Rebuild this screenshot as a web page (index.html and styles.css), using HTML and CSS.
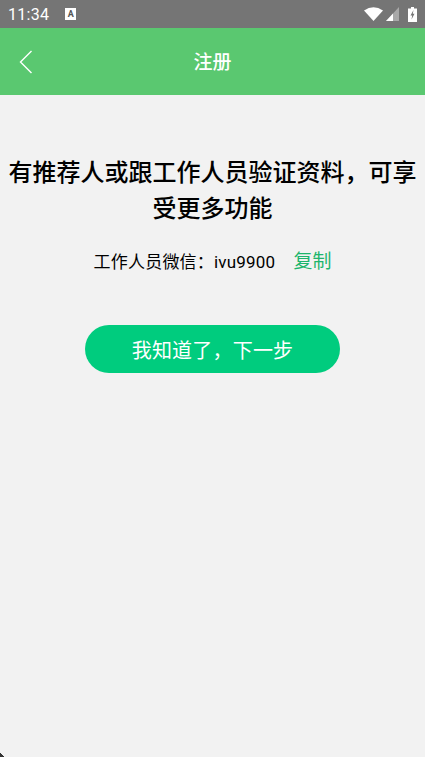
FILE: index.html
```html
<!DOCTYPE html>
<html lang="zh-CN">
<head>
  <meta charset="UTF-8" />
  <meta name="viewport" content="width=device-width, initial-scale=1.0"/>
  <title>注册</title>
  <link rel="stylesheet" href="styles.css">
</head>
<body>
  <div class="statusbar">
    <div class="status-left">
      <span class="time">11:34</span>
      <span class="a-icon">A</span>
    </div>
    <div class="status-right">
      <svg class="wifi" width="19" height="14" viewBox="0 0 19 14"><path d="M0 3.5 Q9.5 -3 19 3.5 L9.5 14 Z" fill="#fff"/></svg>
      <svg class="signal" width="13" height="14" viewBox="0 0 13 14"><path d="M13 0 V14 H0 Z" fill="#a8a8a8"/><path d="M7 6.5 V14 H0 Z" fill="#fff"/></svg>
      <svg class="battery" width="9" height="15" viewBox="0 0 9 15"><path d="M3 0 H6 V1.5 H9 V15 H0 V1.5 H3 Z" fill="#fff"/><path d="M5.5 3 L2.5 8.5 H4.2 L3.5 12.5 L6.5 6.8 H4.8 Z" fill="#757575"/></svg>
    </div>
  </div>

  <header class="navbar">
    <svg class="back" width="14" height="24" viewBox="0 0 14 24"><path d="M12.5 1 L1.5 12 L12.5 23" fill="none" stroke="#fff" stroke-width="1.4"/></svg>
    <h1 class="nav-title">注册</h1>
  </header>

  <main class="content">
    <h2 class="headline">有推荐人或跟工作人员验证资料，可享受更多功能</h2>
    <div class="wechat">
      <span class="wechat-id">工作人员微信：ivu9900</span>
      <span class="copy">复制</span>
    </div>
    <button class="next">我知道了，下一步</button>
  </main>

  <div class="corner"></div>
</body>
</html>
```

FILE: styles.css
```css
* {
  box-sizing: border-box;
}
html, body {
  height: 100%;
}
body {
  margin: 0;
  background: #f2f2f2;
  font-family: Roboto, 'Noto Sans CJK SC', sans-serif;
  color: #000;
  overflow: hidden;
}
.statusbar {
  height: 28px;
  background: #757575;
  color: #fff;
  display: flex;
  align-items: center;
  justify-content: space-between;
  padding: 0 8px;
}
.status-left {
  display: flex;
  align-items: center;
  gap: 16px;
}
.time {
  font-size: 16px;
  letter-spacing: 0.3px;
}
.a-icon {
  width: 11px;
  height: 12px;
  background: #fff;
  color: #555;
  font-size: 9px;
  font-weight: 700;
  line-height: 12px;
  text-align: center;
}
.status-right {
  display: flex;
  align-items: center;
  gap: 3px;
}
.battery {
  margin-left: 6px;
}
.navbar {
  height: 67px;
  padding-bottom: 2px;
  background: #5ac870;
  display: flex;
  align-items: center;
  justify-content: center;
  position: relative;
}
.back {
  position: absolute;
  left: 19px;
  top: 22px;
}
.nav-title {
  margin: 0;
  color: #fff;
  font-size: 19px;
  font-weight: 500;
}
.content {
  display: flex;
  flex-direction: column;
  align-items: center;
  padding: 60px 8px 0;
}
.headline {
  margin: 0;
  font-size: 24px;
  line-height: 36px;
  font-weight: 500;
  text-align: center;
}
.wechat {
  margin-top: 21px;
  font-size: 17px;
  line-height: 28px;
  display: flex;
  align-items: center;
  gap: 18px;
}
.wechat-id {
  letter-spacing: 0.2px;
}
.copy {
  color: #1db56c;
  font-size: 19px;
}
.next {
  margin-top: 49px;
  width: 255px;
  height: 48px;
  border: none;
  border-radius: 24px;
  background: #00cc7e;
  color: #fff;
  font-family: inherit;
  font-size: 20px;
  letter-spacing: 0.2px;
}
.corner {
  position: absolute;
  left: 0;
  bottom: 0;
  width: 4px;
  height: 4px;
  background: linear-gradient(45deg, #333 50%, transparent 50%);
}
```
